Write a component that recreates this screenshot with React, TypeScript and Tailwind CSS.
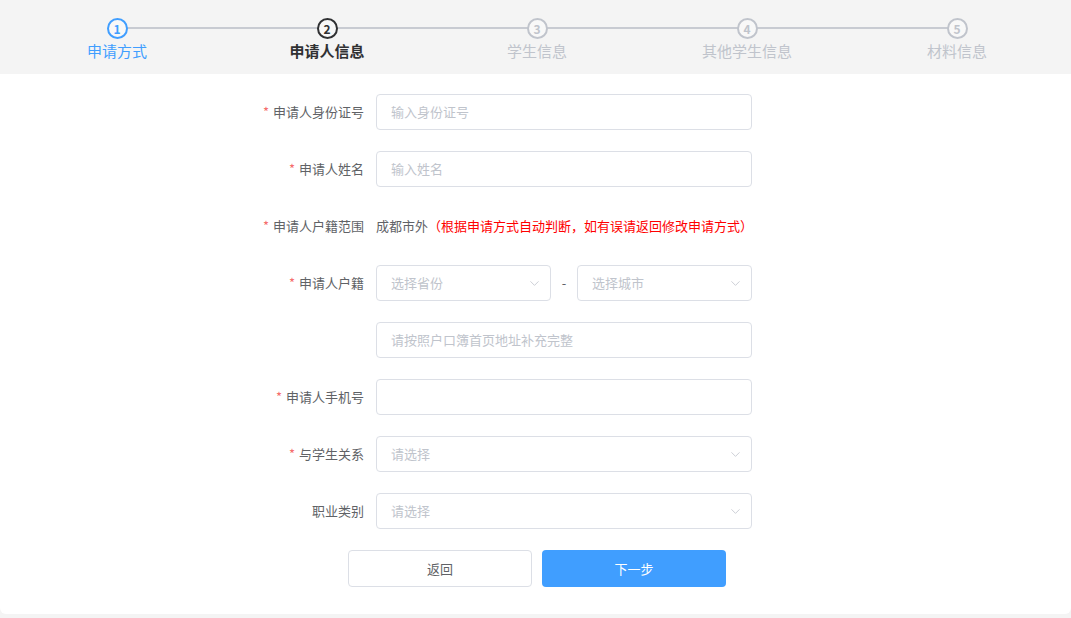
import { FC, ReactNode } from 'react';
import { ChevronDown } from 'lucide-react';

const steps = ['申请方式', '申请人信息', '学生信息', '其他学生信息', '材料信息'];

const Step: FC<{ index: number; label: string }> = ({ index, label }) => {
  const done = index === 0;
  const active = index === 1;
  const circle = done
    ? 'border-[#409eff] text-[#409eff]'
    : active
      ? 'border-[#303133] text-[#303133]'
      : 'border-[#c0c4cc] text-[#c0c4cc]';
  const text = done ? 'text-[#409eff]' : active ? 'text-[#303133] font-bold' : 'text-[#c0c4cc]';

  return (
    <div className="relative flex w-[210px] flex-col items-center">
      {index > 0 && <div className="absolute left-0 right-1/2 top-[27px] h-[2px] bg-[#c8cbd2]" />}
      {index < steps.length - 1 && <div className="absolute left-1/2 right-0 top-[27px] h-[2px] bg-[#c8cbd2]" />}
      <div
        className={`relative z-10 mt-[18px] flex h-[21px] w-[21px] items-center justify-center rounded-full border-2 bg-[#f8f8f8] text-[12px] font-bold leading-none ${circle}`}
      >
        {index + 1}
      </div>
      <div className={`mt-[1px] text-[15px] leading-[22px] ${text}`}>{label}</div>
    </div>
  );
};

const Row: FC<{ label?: string; required?: boolean; children: ReactNode }> = ({ label, required, children }) => (
  <div className="flex h-[36px] items-center">
    <div className="w-[132px] pr-[12px] text-right text-[13px] text-[#606266]">
      {required && <span className="mr-[4px] text-[#f56c6c]">*</span>}
      {label}
    </div>
    {children}
  </div>
);

const Input: FC<{ placeholder?: string }> = ({ placeholder }) => (
  <div className="flex h-[36px] w-[376px] items-center rounded-[4px] border border-[#dcdfe6] bg-white px-[14px] text-[13px] text-[#c0c4cc]">
    {placeholder}
  </div>
);

const Select: FC<{ placeholder: string; className?: string }> = ({ placeholder, className }) => (
  <div
    className={`flex h-[36px] items-center justify-between rounded-[4px] border border-[#dcdfe6] bg-white pl-[14px] pr-[8px] text-[13px] text-[#c0c4cc] ${className ?? 'w-[376px]'}`}
  >
    <span>{placeholder}</span>
    <ChevronDown size={15} strokeWidth={1.3} className="text-[#c0c4cc]" />
  </div>
);

export default function App() {
  return (
    <div
      className="h-[618px] w-full bg-[#f4f4f4]"
      style={{ fontFamily: '"Noto Sans CJK SC", "Noto Sans", sans-serif' }}
    >
      <div className="flex h-[74px] pl-[12px]">
        {steps.map((s, i) => (
          <Step key={s} index={i} label={s} />
        ))}
      </div>

      <div className="h-[540px] rounded-b-[6px] bg-white pt-[20px]">
        <div className="ml-[244px] flex flex-col gap-[21px]">
          <Row label="申请人身份证号" required>
            <Input placeholder="输入身份证号" />
          </Row>
          <Row label="申请人姓名" required>
            <Input placeholder="输入姓名" />
          </Row>
          <Row label="申请人户籍范围" required>
            <span className="text-[13px] text-[#606266]">成都市外</span>
            <span className="text-[13px] text-[#ff0000]">（根据申请方式自动判断，如有误请返回修改申请方式）</span>
          </Row>
          <Row label="申请人户籍" required>
            <div className="flex w-[376px] items-center">
              <Select placeholder="选择省份" className="w-[175px]" />
              <span className="flex-1 text-center text-[13px] text-[#606266]">-</span>
              <Select placeholder="选择城市" className="w-[175px]" />
            </div>
          </Row>
          <Row>
            <Input placeholder="请按照户口簿首页地址补充完整" />
          </Row>
          <Row label="申请人手机号" required>
            <Input />
          </Row>
          <Row label="与学生关系" required>
            <Select placeholder="请选择" />
          </Row>
          <Row label="职业类别">
            <Select placeholder="请选择" />
          </Row>
          <div className="ml-[104px] flex gap-[10px]">
            <button className="h-[37px] w-[184px] rounded-[4px] border border-[#dcdfe6] bg-white text-[13px] text-[#606266]">
              返回
            </button>
            <button className="h-[37px] w-[184px] rounded-[4px] bg-[#409eff] text-[13px] text-white">下一步</button>
          </div>
        </div>
      </div>
    </div>
  );
}
